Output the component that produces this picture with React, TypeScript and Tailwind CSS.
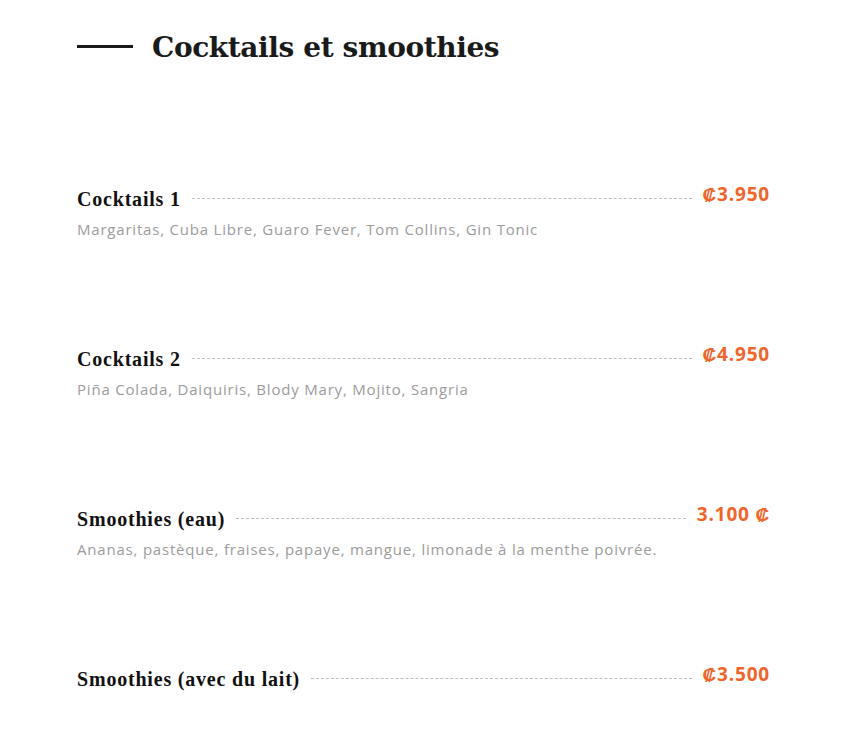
const items = [
  {
    name: "Cocktails 1",
    price: "₡3.950",
    desc: "Margaritas, Cuba Libre, Guaro Fever, Tom Collins, Gin Tonic",
  },
  {
    name: "Cocktails 2",
    price: "₡4.950",
    desc: "Piña Colada, Daiquiris, Blody Mary, Mojito, Sangria",
  },
  {
    name: "Smoothies (eau)",
    price: "3.100 ₡",
    desc: "Ananas, pastèque, fraises, papaye, mangue, limonade à la menthe poivrée.",
  },
  {
    name: "Smoothies (avec du lait)",
    price: "₡3.500",
    desc: "",
  },
];

export default function App() {
  return (
    <section className="w-full h-[745px] bg-white">
      <div className="w-[770px] pl-[77px] pt-[28px]">
        <div className="flex items-center gap-[19px] h-[40px]">
          <span className="block w-[56px] h-[3px] bg-[#1a1a1a] -mt-[4px]" />
          <h2 className="font-['DejaVu_Serif',serif] font-bold text-[28px] text-[#1a1a1a] tracking-[-0.4px]">
            Cocktails et smoothies
          </h2>
        </div>
        <div className="mt-[113px] flex flex-col">
          {items.map((item) => (
            <div key={item.name} className="h-[160px] last:h-auto flex flex-col">
              <div className="flex items-center h-[30px]">
                <span className="font-['Liberation_Serif',serif] font-bold text-[20px] text-[#111] tracking-[0.8px] whitespace-nowrap pt-[6px]">
                  {item.name}
                </span>
                <span className="flex-1 mx-[11px] border-t border-dashed border-[#bdbdbd] mt-[4px]" />
                <span className="font-['Open_Sans',sans-serif] font-bold text-[19px] text-[#f0652a] tracking-[0.8px] whitespace-nowrap -mt-[3px]">
                  {item.price}
                </span>
              </div>
              {item.desc && (
                <p className="mt-[7px] font-['Open_Sans',sans-serif] text-[15px] text-[#9c9c9c] tracking-[0.8px]">
                  {item.desc}
                </p>
              )}
            </div>
          ))}
        </div>
      </div>
    </section>
  );
}
